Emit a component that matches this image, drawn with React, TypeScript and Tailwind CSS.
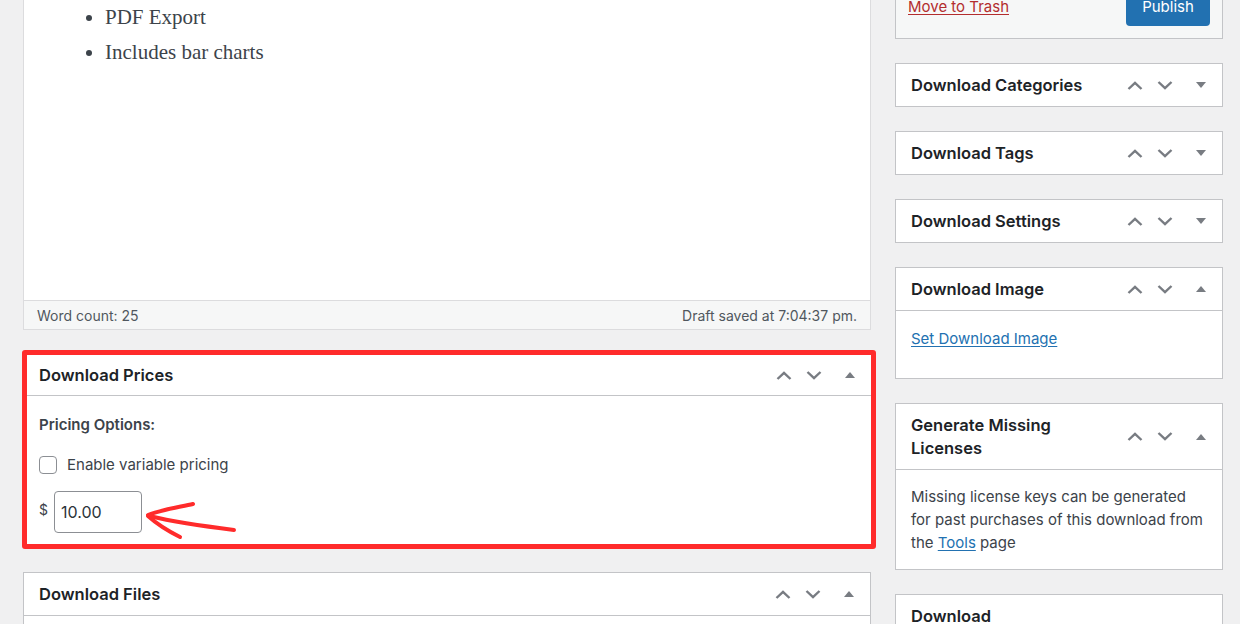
import React from 'react';

const ChevronUp = () => (
  <svg width="16" height="9" viewBox="0 0 16 9" fill="none">
    <path d="M1.5 8 L8 1.8 L14.5 8" stroke="#787c82" strokeWidth="2.4" />
  </svg>
);

const ChevronDown = () => (
  <svg width="16" height="9" viewBox="0 0 16 9" fill="none">
    <path d="M1.5 1 L8 7.2 L14.5 1" stroke="#787c82" strokeWidth="2.4" />
  </svg>
);

const Triangle = ({ up }: { up?: boolean }) => (
  <svg width="10" height="6" viewBox="0 0 10 6">
    {up ? <path d="M0 6 L5 0 L10 6 Z" fill="#787c82" /> : <path d="M0 0 L10 0 L5 6 Z" fill="#787c82" />}
  </svg>
);

const Handles = ({ open }: { open?: boolean }) => (
  <div className="flex items-center self-stretch">
    <div className="w-[30px] flex justify-center"><ChevronUp /></div>
    <div className="w-[30px] flex justify-center"><ChevronDown /></div>
    <div className="w-[42px] flex justify-center"><Triangle up={open} /></div>
  </div>
);

interface BoxProps {
  title: React.ReactNode;
  open?: boolean;
  headerClass?: string;
  titleClass?: string;
  children?: React.ReactNode;
  bodyClass?: string;
  bordered?: boolean;
}

const Postbox: React.FC<BoxProps> = ({ title, open, headerClass = 'h-[42px]', titleClass = 'pl-[15px]', children, bodyClass = '', bordered = true }) => (
  <div className={`bg-white ${bordered ? 'border border-[#c3c4c7]' : ''}`}>
    <div className={`flex items-center justify-between ${headerClass} ${open ? 'border-b border-[#c3c4c7]' : ''}`}>
      <h2 className={`${titleClass} text-[16.5px] leading-[23px] font-semibold text-[#1d2327]`}>{title}</h2>
      <Handles open={open} />
    </div>
    {open && <div className={bodyClass}>{children}</div>}
  </div>
);

export default function App() {
  return (
    <div className="relative w-[1240px] h-[624px] overflow-hidden bg-[#f0f0f1] [font-family:Inter,sans-serif] flex pl-[23px] gap-[24px]">
      {/* main column */}
      <div className="w-[848px] flex flex-col">
        <div className="border border-t-0 border-[#dcdcde] bg-white">
          <div className="h-[300px] pl-[69px]">
            <ul className="list-disc pl-[12px] text-[21px] leading-[35px] text-[#3c434a] [font-family:'Liberation_Serif',serif]">
              <li>PDF Export</li>
              <li>Includes bar charts</li>
            </ul>
          </div>
          <div className="h-[29px] bg-[#f6f7f7] border-t border-[#dcdcde] flex items-center justify-between px-[13px] text-[14px] text-[#50575e]">
            <span>Word count: 25</span>
            <span>Draft saved at 7:04:37 pm.</span>
          </div>
        </div>

        <div className="mt-[20px] -ml-[1px] -mr-[5px] border-[5px] border-[#ff2b2b] rounded-[3px]">
          <Postbox title="Download Prices" open bordered={false} headerClass="h-[41px]" titleClass="pl-[12px]" bodyClass="h-[148px] pl-[12px] pt-[18px] text-[#3c434a]">
            <div className="text-[15px] leading-[22px] font-semibold">Pricing Options:</div>
            <label className="mt-[18px] flex items-center gap-[10px] text-[15px]">
              <span className="w-[18px] h-[18px] rounded-[4px] border border-[#8c8f94] bg-white" />
              <span>Enable variable pricing</span>
            </label>
            <div className="mt-[14px] flex items-center gap-[6px]">
              <span className="text-[14px] -mt-[4px]">$</span>
              <div className="w-[88px] h-[42px] rounded-[4px] border border-[#8c8f94] flex items-center px-[6px] text-[16px] text-[#2c3338]">10.00</div>
            </div>
          </Postbox>
        </div>

        <div className="mt-[23px]">
          <Postbox title="Download Files" open headerClass="h-[43px]" bodyClass="h-[40px]" />
        </div>
      </div>

      {/* side column */}
      <div className="w-[328px] flex flex-col gap-[24px]">
        <div className="-mt-[12px] border border-[#c3c4c7] bg-[#f6f7f7] pb-[12px]">
          <div className="h-[37px] flex items-center justify-between pl-[12px] pr-[12px]">
            <a className="text-[15px] text-[#b32d2e] underline underline-offset-2">Move to Trash</a>
            <button className="w-[84px] h-[37px] rounded-[4px] bg-[#2271b1] text-white text-[15px]">Publish</button>
          </div>
        </div>
        <Postbox title="Download Categories" />
        <Postbox title="Download Tags" />
        <Postbox title="Download Settings" />
        <Postbox title="Download Image" open headerClass="h-[43px]" bodyClass="h-[67px] pl-[15px] pt-[15px]">
          <a className="text-[15px] leading-[22px] text-[#2271b1] underline underline-offset-2">Set Download Image</a>
        </Postbox>
        <Postbox title={<>Generate Missing<br />Licenses</>} open headerClass="h-[66px]" bodyClass="h-[99px] pl-[15px] pr-[16px] pt-[15px] text-[15px] leading-[23px] text-[#3c434a]">
          <p>Missing license keys can be generated for past purchases of this download from the <a className="text-[#2271b1] underline underline-offset-2">Tools</a> page</p>
        </Postbox>
        <Postbox title={<>Download<br />Licensing</>} headerClass="h-[66px]" />
      </div>

      {/* annotation arrow */}
      <svg className="absolute left-[140px] top-[497px]" width="100" height="46" viewBox="0 0 100 46" fill="none">
        <path d="M53 7 C40 10 20 13 8 18" stroke="#ff2b2b" strokeWidth="4" strokeLinecap="round" />
        <path d="M8 19 C18 28 30 35 40 40" stroke="#ff2b2b" strokeWidth="4" strokeLinecap="round" />
        <path d="M9 19 C35 25 70 30 94 33" stroke="#ff2b2b" strokeWidth="4" strokeLinecap="round" />
      </svg>
    </div>
  );
}
